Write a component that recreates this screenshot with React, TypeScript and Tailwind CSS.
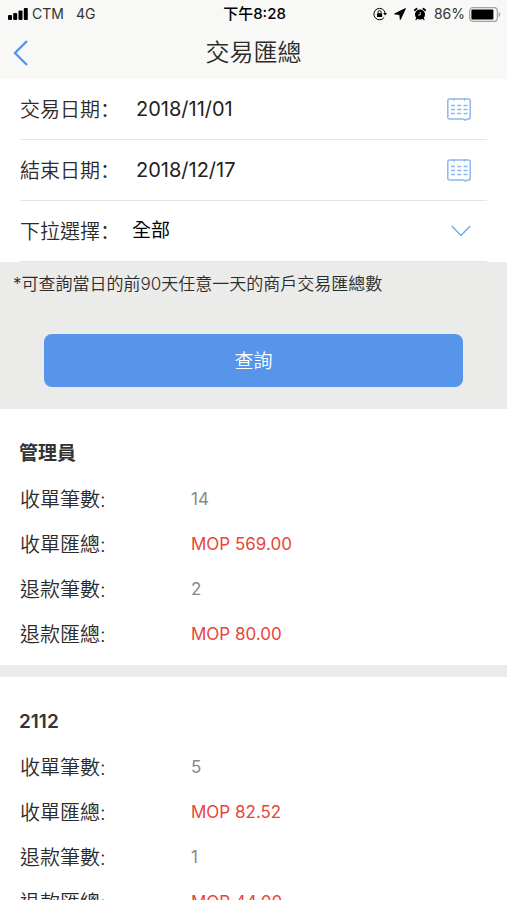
import { useState } from "react"

type Summary = {
  name: string
  orderCount: number
  orderTotal: string
  refundCount: number
  refundTotal: string
}

const summaries: Summary[] = [
  { name: "管理員", orderCount: 14, orderTotal: "569.00", refundCount: 2, refundTotal: "80.00" },
  { name: "2112", orderCount: 5, orderTotal: "82.52", refundCount: 1, refundTotal: "44.00" },
]

function SignalIcon() {
  return (
    <svg className="h-3 w-5" viewBox="0 0 20 12" aria-hidden="true">
      <rect x="0" y="7" width="4" height="5" rx="1" />
      <rect x="5.2" y="5" width="4" height="7" rx="1" />
      <rect x="10.5" y="2.5" width="4" height="9.5" rx="1" />
      <rect x="15.8" y="0" width="4" height="12" rx="1" />
    </svg>
  )
}

function RotationLockIcon() {
  return (
    <svg className="h-3.5 w-3.5" viewBox="0 0 14 14" fill="none" stroke="currentColor" aria-hidden="true">
      <path d="M12.2 6.2A5.7 5.7 0 1 0 11.2 10.4" strokeWidth="1" />
      <path d="M10.2 6h3.8l-1.9 2.6z" fill="currentColor" stroke="none" />
      <rect x="4" y="6.3" width="5.2" height="3.8" rx="0.5" fill="currentColor" stroke="none" />
      <path d="M5.1 6.5V5.1a1.5 1.5 0 0 1 3 0v1.4" strokeWidth="0.9" />
    </svg>
  )
}

function LocationIcon() {
  return (
    <svg className="h-3 w-3" viewBox="0 0 12 12" aria-hidden="true">
      <path d="M11.4 0.6 0.6 5.9l5.2 0.5 0.5 5.1z" stroke="currentColor" strokeWidth="1" strokeLinejoin="round" />
    </svg>
  )
}

function AlarmIcon() {
  return (
    <svg className="h-3.5 w-3.5" viewBox="0 0 14 14" fill="none" stroke="currentColor" aria-hidden="true">
      <circle cx="7" cy="7.6" r="5" fill="currentColor" stroke="none" />
      <path d="M1.8 3.2 3.6 1.8M12.2 3.2 10.4 1.8" strokeWidth="1.8" strokeLinecap="round" />
      <path d="M3.8 11.5 3 12.6M10.2 11.5l0.8 1.1" strokeWidth="1.2" strokeLinecap="round" />
      <path d="M7.2 5v3H5" stroke="#f8f8f6" strokeWidth="0.8" />
    </svg>
  )
}

function BatteryIcon() {
  return (
    <svg className="h-[15px] w-8" viewBox="0 0 32 15" aria-hidden="true">
      <rect x="0.7" y="0.7" width="27.6" height="13.6" rx="3" fill="none" stroke="#a3a3a1" strokeWidth="1.2" />
      <rect x="2.4" y="2.4" width="22" height="10.2" rx="1" />
      <path d="M29.6 5c2.2 0.6 2.2 4.4 0 5z" fill="#a3a3a1" />
    </svg>
  )
}

function CalendarIcon() {
  return (
    <svg className="h-6 w-6" viewBox="0 0 24 24" fill="none" stroke="#8cb8f2" aria-hidden="true">
      <path
        d="M16.5 22H2.6A1.8 1.8 0 0 1 0.8 20.2V3.8A1.8 1.8 0 0 1 2.6 2h18.8a1.8 1.8 0 0 1 1.8 1.8v16.4a1.8 1.8 0 0 1-1.8 1.8h-1.2l-1.8 1.2-1.9-1.2"
        strokeWidth="1.5"
      />
      <path d="M6.8 1v2.8M17.4 1v2.8" strokeWidth="1.3" />
      <path
        d="M4 8.5h4M10.2 8.5h4M16.6 8.5h4M4 12.5h4M10.2 12.5h4M16.6 12.5h4M4 16.5h4M10.2 16.5h4M16.6 16.5h4"
        strokeWidth="1.5"
      />
    </svg>
  )
}

function StatusBar() {
  return (
    <div className="flex h-7 items-center justify-between pr-1.5 pl-2 text-sm text-[#333]">
      <div className="flex flex-1 items-center gap-1 text-black">
        <SignalIcon />
        <span className="text-[#333]">CTM</span>
        <span className="ml-2 text-[#333]">4G</span>
      </div>
      <div className="text-[15px] font-medium text-black">下午8:28</div>
      <div className="flex flex-1 items-center justify-end gap-[7px] text-black">
        <RotationLockIcon />
        <LocationIcon />
        <AlarmIcon />
        <div className="flex items-center gap-1">
          <span className="text-[#333]">86%</span>
          <BatteryIcon />
        </div>
      </div>
    </div>
  )
}

function FieldLabel({ htmlFor, text }: { htmlFor: string; text: string }) {
  return (
    <label htmlFor={htmlFor} className="flex-none text-xl font-[350]">
      {text}
      <span className="font-['Noto_Sans_CJK_SC',sans-serif]" lang="zh-Hans">
        ：
      </span>
    </label>
  )
}

function DateField({ id, label, initial }: { id: string; label: string; initial: string }) {
  const [value, setValue] = useState(initial)

  return (
    <div className="flex h-[61px] items-center border-b border-[#e5e5e5] pr-4">
      <FieldLabel htmlFor={id} text={label} />
      <input
        id={id}
        type="text"
        value={value}
        onChange={(e) => setValue(e.target.value)}
        className="ml-4 min-w-0 flex-1 bg-transparent text-xl text-[#222] outline-none"
      />
      <button type="button" aria-label={label}>
        <CalendarIcon />
      </button>
    </div>
  )
}

function SummaryRow({ label, value, money }: { label: string; value: string; money?: boolean }) {
  return (
    <div className="flex h-[45px] items-center">
      <dt className="w-[171px] flex-none text-xl font-[350]">{label}:</dt>
      <dd className={money ? "text-[17px] text-[#e8453c]" : "text-[17px] text-[#888]"}>{value}</dd>
    </div>
  )
}

function SummaryCard({ summary }: { summary: Summary }) {
  return (
    <section className="bg-white px-[19px] pt-[23px] pb-2">
      <h2 className="flex h-[45px] items-center text-[19px] font-semibold text-[#333]">{summary.name}</h2>
      <dl className="px-px">
        <SummaryRow label="收單筆數" value={String(summary.orderCount)} />
        <SummaryRow label="收單匯總" value={`MOP ${summary.orderTotal}`} money />
        <SummaryRow label="退款筆數" value={String(summary.refundCount)} />
        <SummaryRow label="退款匯總" value={`MOP ${summary.refundTotal}`} money />
      </dl>
    </section>
  )
}

export default function App() {
  return (
    <div className="flex h-screen flex-col bg-white font-['Inter','Noto_Sans_CJK_TC',sans-serif] text-[#2b2b2b]">
      <header className="flex-none bg-[#f8f8f6]">
        <StatusBar />
        <div className="flex h-[51px] items-center px-3 pb-px">
          <button type="button" aria-label="返回" className="w-8">
            <svg className="h-7 w-5" viewBox="0 0 20 28" fill="none" stroke="#5795eb" strokeWidth="2.4" aria-hidden="true">
              <path d="M15 2 3 14l12 12" />
            </svg>
          </button>
          <h1 className="flex-1 text-center text-2xl font-[350]">交易匯總</h1>
          <div className="w-8" />
        </div>
      </header>

      <main className="min-h-0 flex-1 overflow-y-auto [scrollbar-width:none]">
        <form onSubmit={(e) => e.preventDefault()}>
          <div className="px-5">
            <DateField id="start-date" label="交易日期" initial="2018/11/01" />
            <DateField id="end-date" label="結束日期" initial="2018/12/17" />
            <div className="flex h-[61px] items-center border-b border-[#e5e5e5] pr-4">
              <FieldLabel htmlFor="scope" text="下拉選擇" />
              <select
                id="scope"
                className="ml-3 min-w-0 flex-1 appearance-none bg-transparent text-[19px] text-black outline-none"
              >
                <option>全部</option>
              </select>
              <svg
                className="pointer-events-none h-3 w-5"
                viewBox="0 0 20 12"
                fill="none"
                stroke="#78a9ec"
                strokeWidth="1.5"
                aria-hidden="true"
              >
                <path d="M0.8 1 10 10.4 19.2 1" />
              </svg>
            </div>
          </div>
          <div className="bg-[#ebebe9] pt-2 pb-[22px]">
            <p className="px-[13px] text-[17px] leading-7 font-[350]">*可查詢當日的前90天任意一天的商戶交易匯總數</p>
            <div className="mt-9 px-11">
              <button
                type="submit"
                className="h-[53px] w-full rounded-lg bg-[#5795eb] pt-1 text-[19px] font-[350] text-white"
              >
                查詢
              </button>
            </div>
          </div>
        </form>

        <div className="flex flex-col gap-3 bg-[#ebebe9]">
          {summaries.map((summary) => (
            <SummaryCard key={summary.name} summary={summary} />
          ))}
        </div>
      </main>
    </div>
  )
}
